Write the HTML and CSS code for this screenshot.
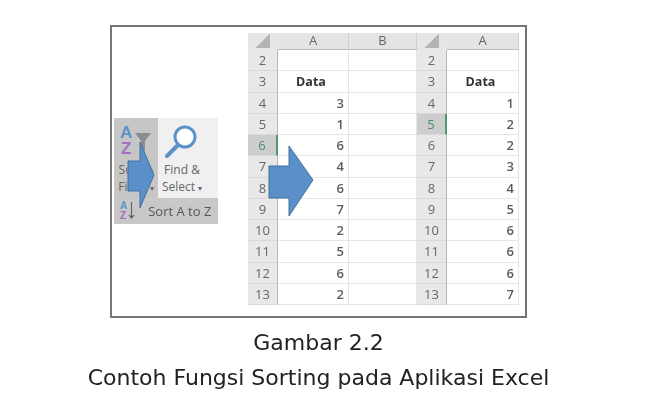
FILE: index.html
```html
<!DOCTYPE html>
<html lang="id">
<head>
<meta charset="utf-8">
<title>Gambar 2.2</title>
<link rel="stylesheet" href="styles.css">
</head>
<body>
<figure class="figure">
  <div class="frame">
    <div class="shot">
      <div class="ribbon">
        <div class="tools">
          <div class="tool tool-sort">
            <div class="az-row">
              <div class="az"><span class="a">A</span><span class="z">Z</span></div>
              <svg class="funnel" width="16" height="22" viewBox="0 0 16 22"><path d="M0 2h16L10 10v10l-4-2v-8z" fill="#8c8c8c"/></svg>
            </div>
            <div class="tool-label">Sort &amp;<br>Filter <span class="caret">▾</span></div>
          </div>
          <div class="tool tool-find">
            <svg class="lens" width="34" height="36" viewBox="0 0 34 36"><circle cx="21" cy="13" r="10" fill="#fff" stroke="#5b93c7" stroke-width="3"/><path d="M14 21L3 32" stroke="#5b93c7" stroke-width="4" stroke-linecap="round"/></svg>
            <div class="tool-label">Find &amp;<br>Select <span class="caret">▾</span></div>
          </div>
        </div>
        <div class="menu-item">
          <div class="az-mini"><span class="a">A</span><span class="z">Z</span></div>
          <svg class="down" width="7" height="20" viewBox="0 0 7 20"><path d="M3.5 1v16M1 14l2.5 3L6 14" stroke="#666" stroke-width="1.2" fill="none"/></svg>
          <span>Sort A to Z</span>
        </div>
      </div>
      <div class="sheet sheet-two-col">
        <div class="corner"></div><div class="col">A</div><div class="col">B</div>
        <div class="hd">2</div><div class="c"></div><div class="c"></div>
        <div class="hd">3</div><div class="c title">Data</div><div class="c"></div>
        <div class="hd">4</div><div class="c">3</div><div class="c"></div>
        <div class="hd">5</div><div class="c">1</div><div class="c"></div>
        <div class="hd active">6</div><div class="c">6</div><div class="c"></div>
        <div class="hd">7</div><div class="c">4</div><div class="c"></div>
        <div class="hd">8</div><div class="c">6</div><div class="c"></div>
        <div class="hd">9</div><div class="c">7</div><div class="c"></div>
        <div class="hd">10</div><div class="c">2</div><div class="c"></div>
        <div class="hd">11</div><div class="c">5</div><div class="c"></div>
        <div class="hd">12</div><div class="c">6</div><div class="c"></div>
        <div class="hd">13</div><div class="c">2</div><div class="c"></div>
      </div>
      <div class="sheet sheet-one-col">
        <div class="corner"></div><div class="col">A</div>
        <div class="hd">2</div><div class="c"></div>
        <div class="hd">3</div><div class="c title">Data</div>
        <div class="hd">4</div><div class="c">1</div>
        <div class="hd active">5</div><div class="c">2</div>
        <div class="hd">6</div><div class="c">2</div>
        <div class="hd">7</div><div class="c">3</div>
        <div class="hd">8</div><div class="c">4</div>
        <div class="hd">9</div><div class="c">5</div>
        <div class="hd">10</div><div class="c">6</div>
        <div class="hd">11</div><div class="c">6</div>
        <div class="hd">12</div><div class="c">6</div>
        <div class="hd">13</div><div class="c">7</div>
      </div>
      <svg class="arrow arrow-small" width="28" height="68" viewBox="0 0 28 68"><path d="M1 20H13V1L27 34 13 67V50H1z" fill="#5b8fc9" stroke="#41719c"/></svg>
      <svg class="arrow arrow-big" width="46" height="72" viewBox="0 0 46 72"><path d="M1 21H21V1L45 35 21 71V53H1z" fill="#5b8fc9" stroke="#41719c"/></svg>
    </div>
  </div>
  <figcaption class="caption">
    <div>Gambar 2.2</div>
    <div>Contoh Fungsi Sorting pada Aplikasi Excel</div>
  </figcaption>
</figure>
</body>
</html>
```
FILE: styles.css
```css
* { box-sizing: border-box; }
html, body { margin: 0; background: #fff; }
body { width: 650px; height: 412px; overflow: hidden; }

.figure {
  width: 480px;
  margin: 25px 0 0 78.5px;
  display: flex;
  flex-direction: column;
  align-items: center;
}

.frame {
  width: 417px;
  height: 293px;
  border: 2px solid #757575;
  background: #fff;
  padding: 6px 0 0 2px;
}

.shot {
  position: relative;
  display: flex;
  align-items: flex-start;
  filter: blur(0.65px);
  font-family: "Open Sans", "Liberation Sans", sans-serif;
  color: #555;
}

/* Ribbon fragment */
.ribbon {
  width: 104px;
  margin: 85px 30px 0 0;
  flex: none;
  font-size: 12px;
  color: #666;
}
.tools {
  display: flex;
  height: 80px;
  background: #f0f0f0;
}
.tool { text-align: center; line-height: 17px; }
.tool-sort { width: 44px; background: #c6c6c6; padding-top: 7px; }
.tool-find { width: 46px; margin-left: 1px; }
.tool-label { white-space: nowrap; }
.az-row { display: flex; height: 36px; padding-left: 6px; }
.az {
  display: flex; flex-direction: column;
  font: 700 17px/16px "Liberation Sans", sans-serif;
}
.a { color: #5b93c7; }
.z { color: #a56fc4; }
.funnel { margin: 6px 0 0 3px; }
.lens { display: block; margin: 6px 0 1px 5px; }
.caret { font-size: 8px; }
.menu-item {
  display: flex;
  align-items: center;
  height: 26px;
  padding-left: 6px;
  background: #c8c8c8;
  font-size: 13px;
  color: #555;
}
.az-mini {
  display: flex; flex-direction: column;
  font: 700 10px/10px "Liberation Sans", sans-serif;
}
.down { margin: 0 13px 0 1px; }

/* Spreadsheet grids */
.sheet {
  display: grid;
  grid-template-rows: 17px;
  grid-auto-rows: 21.25px;
  font-size: 13px;
  flex: none;
}
.sheet-two-col { grid-template-columns: 30px 71px 68px; }
.sheet-one-col { grid-template-columns: 30px 72px; }

.corner {
  background: linear-gradient(135deg, #e6e6e6 50%, #b4b4b4 50%);
  border-right: 8px solid #e6e6e6;
  border-bottom: 2px solid #e6e6e6;
  border-left: 8px solid #e6e6e6;
}
.col {
  background: #e4e4e4;
  border-right: 1px solid #cfcfcf;
  border-bottom: 1px solid #bdbdbd;
  text-align: center;
  line-height: 15px;
  color: #666;
}
.hd {
  background: #e8e8e8;
  border-right: 1px solid #b4b4b4;
  border-bottom: 1px solid #d8d8d8;
  text-align: center;
  line-height: 20px;
  color: #666;
}
.hd.active {
  background: #cdcdcd;
  color: #4f8a6b;
  border-right: 2px solid #4e9a6d;
}
.c {
  border-right: 1px solid #e6e6e6;
  border-bottom: 1px solid #e6e6e6;
  text-align: right;
  padding-right: 4px;
  line-height: 20px;
  font-weight: 600;
  color: #5c5c5c;
}
.c.title {
  text-align: center;
  font-weight: 700;
  font-size: 12.5px;
  line-height: 22px;
  color: #333;
}

/* Arrows over the picture */
.arrow { position: absolute; }
.arrow-small { left: 13px; top: 108px; }
.arrow-big { left: 154px; top: 112px; }

/* Caption */
.caption {
  margin-top: 6.5px;
  text-align: center;
  font-family: "DejaVu Sans", sans-serif;
  font-size: 22px;
  line-height: 35px;
  color: #222;
  white-space: nowrap;
  filter: blur(0.35px);
}
```
